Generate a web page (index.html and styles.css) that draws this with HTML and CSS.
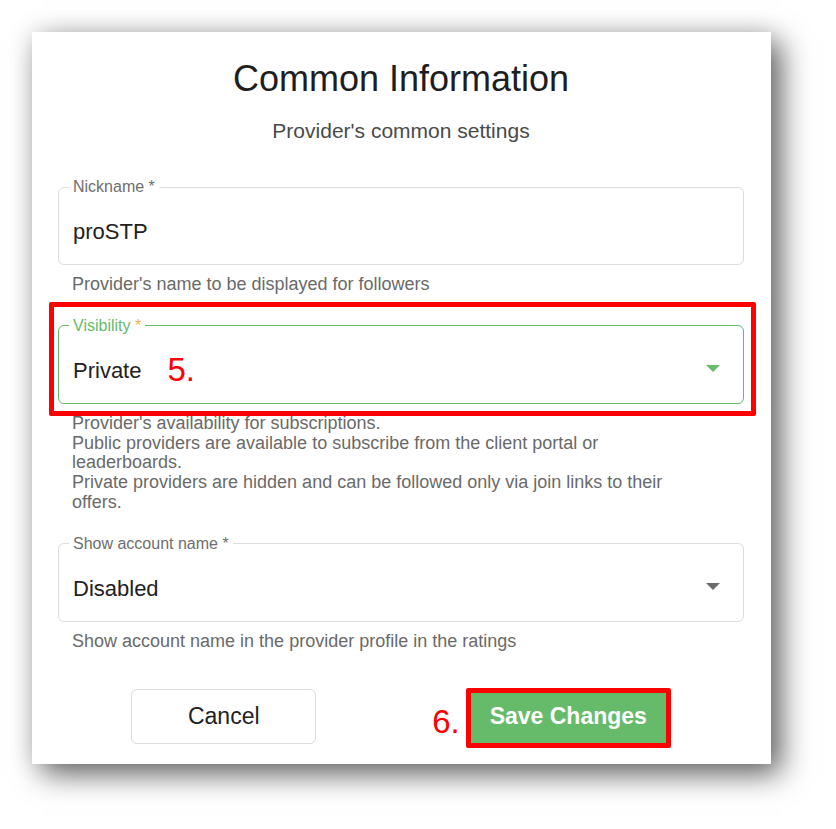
FILE: index.html
```html
<!DOCTYPE html>
<html lang="en">
<head>
    <meta charset="UTF-8">
    <meta name="viewport" content="width=device-width, initial-scale=1.0">
    <title>Common Information</title>
    <link rel="stylesheet" href="styles.css">
</head>
<body>

<div class="card">
    <h1 class="title">Common Information</h1>
    <p class="subtitle">Provider's common settings</p>

    <div class="field">
        <fieldset class="outline">
            <legend>Nickname *</legend>
            <div class="value">proSTP</div>
        </fieldset>
        <p class="helper">Provider's name to be displayed for followers</p>
    </div>

    <div class="field">
        <div class="control">
            <fieldset class="outline active">
                <legend>Visibility <span class="req">*</span></legend>
                <div class="value">
                    <span>Private<span class="step step-inline">5.</span></span>
                    <svg class="arrow" width="14" height="7" viewBox="0 0 10 5"><path d="M0 0l5 5 5-5z"/></svg>
                </div>
            </fieldset>
            <span class="mark mark-field"></span>
        </div>
        <p class="helper">Provider's availability for subscriptions.<br>
Public providers are available to subscribe from the client portal or leaderboards.<br>
Private providers are hidden and can be followed only via join links to their offers.</p>
    </div>

    <div class="field">
        <fieldset class="outline">
            <legend>Show account name *</legend>
            <div class="value">
                <span>Disabled</span>
                <svg class="arrow" width="14" height="7" viewBox="0 0 10 5"><path d="M0 0l5 5 5-5z"/></svg>
            </div>
        </fieldset>
        <p class="helper">Show account name in the provider profile in the ratings</p>
    </div>

    <div class="actions">
        <button class="cancel-btn">Cancel</button>
        <div class="save-wrap">
            <span class="step step-save">6.</span>
            <button class="save-btn">Save Changes</button>
            <span class="mark mark-save"></span>
        </div>
    </div>
</div>

</body>
</html>
```

FILE: styles.css
```css
body {
    font-family: "Liberation Sans", Arial, sans-serif;
    background-color: #fff;
    margin: 0;
    padding-bottom: 70px;
}
.card {
    box-sizing: border-box;
    width: 739px;
    margin: 32px 0 0 32px;
    padding: 25px 27px 20px 26px;
    background: white;
    box-shadow: 10px 10px 28px rgba(0,0,0,0.6), 0 0 24px rgba(0,0,0,0.1);
}
.title {
    margin: 0;
    font-size: 36px;
    line-height: 44px;
    font-weight: normal;
    text-align: center;
    color: #1e1e1e;
}
.subtitle {
    margin: 18px 0 0;
    font-size: 21px;
    line-height: 24px;
    text-align: center;
    color: #4a4a4a;
}
.field {
    margin-top: 23px;
}
.subtitle + .field {
    margin-top: 36px;
}
.control {
    position: relative;
}
.outline {
    margin: 0;
    padding: 0 14px;
    border: 1px solid #dcdcdc;
    border-radius: 6px;
}
.outline legend {
    padding: 0 4px;
    margin-left: -4px;
    font-size: 16px;
    line-height: 16px;
    color: #6e6e6e;
}
.outline.active {
    border-color: #66bb6a;
}
.outline.active legend {
    color: #66bb6a;
}
.req {
    color: #f5b342;
}
.value {
    display: flex;
    justify-content: space-between;
    align-items: center;
    padding: 24px 0 19px;
    font-size: 22px;
    line-height: 26px;
    color: #222;
}
.arrow {
    fill: #6b6b6b;
    margin: 0 9px 4px 0;
}
.active .arrow {
    fill: #66bb6a;
}
.helper {
    margin: 10px 14px 0;
    max-width: 620px;
    font-size: 18px;
    line-height: 19.8px;
    color: #6a6a6a;
}
.step {
    color: #ff0000;
    font-size: 33px;
}
.step-inline {
    position: relative;
    top: 3px;
    margin-left: 26px;
    line-height: 0;
}
.mark {
    position: absolute;
    border: 5px solid #ff0000;
    border-radius: 2px;
    pointer-events: none;
}
.mark-field {
    top: -16px;
    left: -9px;
    right: -12px;
    bottom: -12px;
}
.actions {
    display: flex;
    justify-content: space-around;
    margin: 37px 0 0 -3px;
}
button {
    font-family: inherit;
    font-size: 23px;
    height: 55px;
    border-radius: 6px;
    cursor: pointer;
}
.cancel-btn {
    width: 185px;
    background: white;
    border: 1px solid #dcdcdc;
    color: #222;
}
.save-wrap {
    position: relative;
}
.save-btn {
    display: block;
    width: 199px;
    background-color: #66bb6a;
    border: none;
    border-radius: 4px;
    color: white;
    font-weight: bold;
}
.step-save {
    position: absolute;
    right: calc(100% + 9px);
    top: 16px;
    line-height: 33px;
}
.mark-save {
    top: -1px;
    left: -3px;
    right: -3px;
    bottom: -4px;
}
```
